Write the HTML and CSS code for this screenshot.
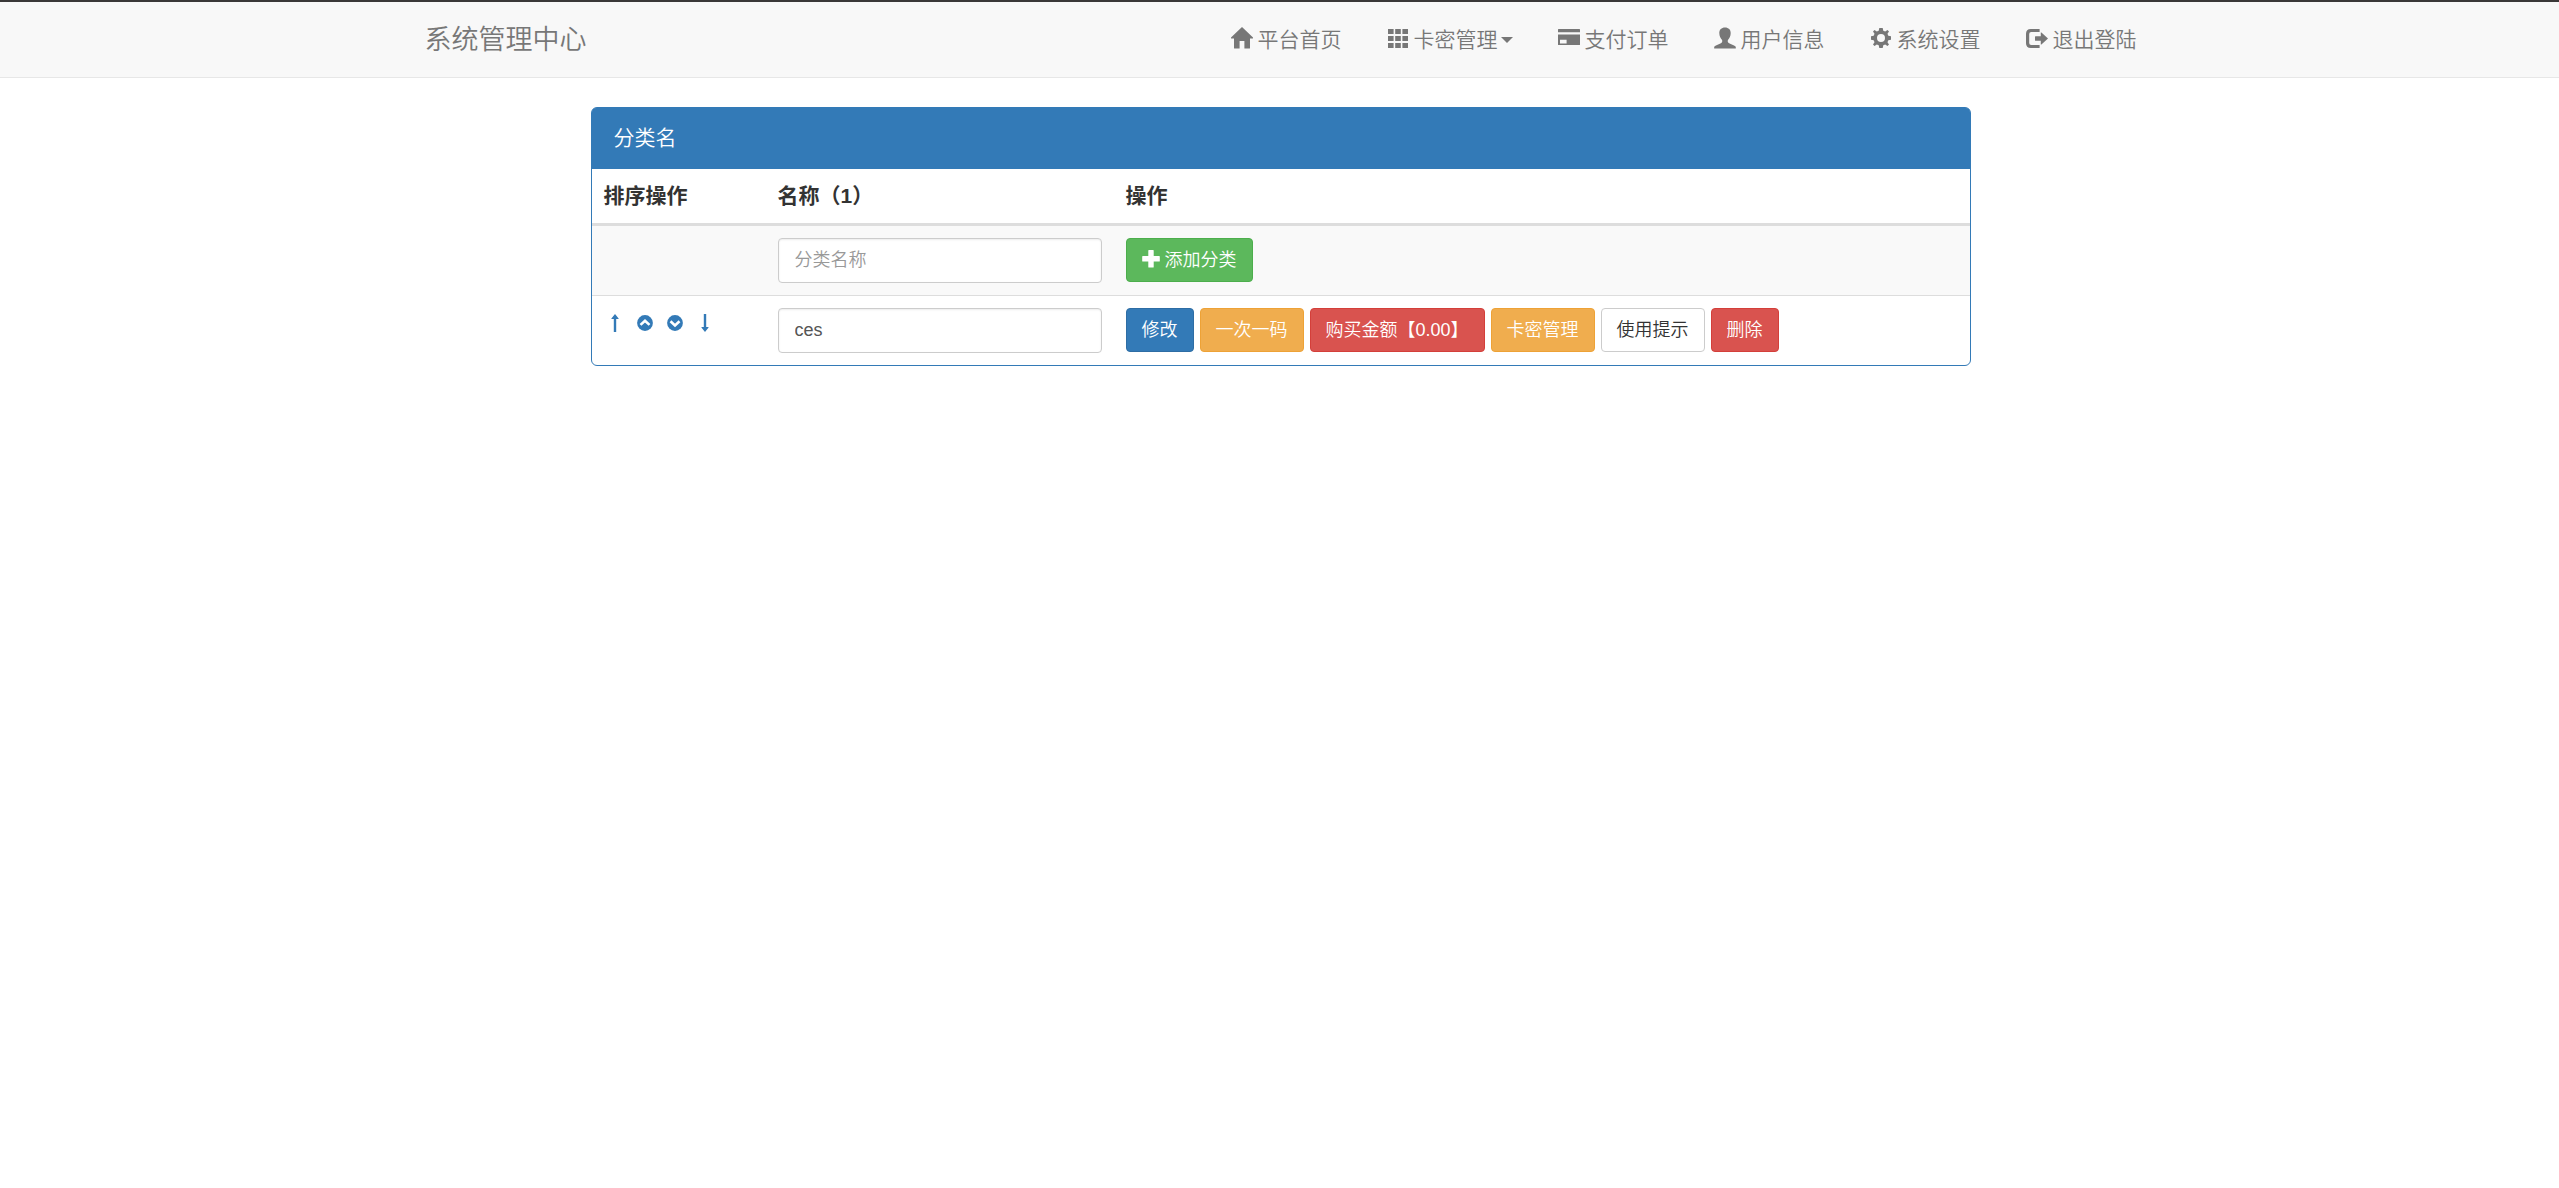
FILE: index.html
```
<!DOCTYPE html>
<html lang="zh-CN">
<head>
<meta charset="utf-8">
<meta name="viewport" content="width=device-width, initial-scale=1">
<title>系统管理中心</title>
<link rel="stylesheet" href="styles.css">
</head>
<body>
<header class="navbar">
  <div class="navbar-inner">
    <a class="brand" href="#">系统管理中心</a>
    <nav class="menu">
      <a class="menu-link" href="#">
        <svg class="icon" viewBox="0 0 22 22" aria-hidden="true"><path d="M11 0 22 10.6c.2.6 0 1-.6 1H19V21q0 .6-.6.6H13.400V14H8.600v7.600H3.600Q3 21.600 3 21V11.600H.6c-.6 0-.8-.4-.6-1z"/></svg>
        <span>平台首页</span>
      </a>
      <a class="menu-link" href="#">
        <svg class="icon" viewBox="0 0 22 22" aria-hidden="true"><path d="M1 2h5.600v5H1zM8.200 2h5.600v5H8.200zM15.400 2H21v5h-5.600zM1 9h5.600v5H1zM8.200 9h5.600v5H8.200zM15.400 9H21v5h-5.600zM1 16h5.600v5H1zM8.200 16h5.600v5H8.200zM15.400 16H21v5h-5.600z"/></svg>
        <span>卡密管理</span>
        <i class="caret"></i>
      </a>
      <a class="menu-link" href="#">
        <svg class="icon" viewBox="0 0 22 22" aria-hidden="true"><path fill-rule="evenodd" d="M.6 2h20.800q.6 0 .6.600V5.200H0V2.600Q0 2 .6 2zM0 7.600h22v9.800q0 .6-.6.600H.6q-.6 0-.6-.6zM2 12.800v3.600h6.600v-3.600z"/></svg>
        <span>支付订单</span>
      </a>
      <a class="menu-link" href="#">
        <svg class="icon" viewBox="0 0 22 22" aria-hidden="true"><path d="M11 .4c3.600 0 5.700 2.200 5.700 5.600 0 3.200-1.300 5.200-2.600 6.800-.6.900-.5 2.200.3 2.900 1.600 1.200 6.600 2.500 7.300 4.100.2.500.1 1.800.1 1.800H.2s-.1-1.300.1-1.800c.7-1.600 5.700-2.900 7.300-4.100.8-.7.9-2 .3-2.900C6.600 11.200 5.300 9.200 5.300 6 5.300 2.600 7.400.4 11 .4z"/></svg>
        <span>用户信息</span>
      </a>
      <a class="menu-link" href="#">
        <svg class="icon" viewBox="0 0 22 22" aria-hidden="true"><path fill-rule="evenodd" d="m9.300 1h3.400l.6 2.700 1.900.8 2.300-1.500L19 4.500 17.500 6.800l.8 1.900 2.700.6v3.400l-2.700.6-.8 1.900L19 17.500 17.500 19l-2.300-1.500-1.900.8-.6 2.700H9.300l-.6-2.700-1.900-.8L4.500 19 3 17.500l1.500-2.300-.8-1.900L1 12.700V9.300l2.700-.6.8-1.900L3 4.500 4.500 3l2.300 1.500 1.900-.8zM11 7a4 4 0 1 0 0 8 4 4 0 0 0 0-8z"/></svg>
        <span>系统设置</span>
      </a>
      <a class="menu-link" href="#">
        <svg class="icon" viewBox="0 0 22 22" aria-hidden="true"><path d="M13.600 2v3H5.200Q3.200 5 3.200 7v9q0 2 2 2h8.400v3H4.800Q0 21 0 16.200V6.800Q0 2 4.800 2zM14.800 5.600q.2-.4.600 0L22 11.500l-6.600 5.900q-.4.400-.6 0V13.800H9.600q-.6 0-.6-.6V9.800q0-.6.6-.6h5.200z"/></svg>
        <span>退出登陆</span>
      </a>
    </nav>
  </div>
</header>

<main class="content">
  <section class="panel">
    <h1 class="panel-title">分类名</h1>
    <table class="table">
      <thead>
        <tr>
          <th class="col-sort">排序操作</th>
          <th class="col-name">名称（1）</th>
          <th>操作</th>
        </tr>
      </thead>
      <tbody>
        <tr>
          <td></td>
          <td><input class="field" type="text" placeholder="分类名称" aria-label="分类名称"></td>
          <td>
            <div class="actions">
              <button class="btn btn-success" type="button">
                <svg class="btn-icon" viewBox="0 0 18 18" aria-hidden="true"><path d="M6.900 0h4.200q.6 0 .6.600V6.100h5.500q.6 0 .6.600v4.200q0 .6-.6.600H11.700v5.500q0 .6-.6.600H6.900q-.6 0-.6-.6V11.500H.8q-.6 0-.6-.6V6.700q0-.6.600-.6H6.300V.6q0-.6.600-.6z"/></svg>
                <span>添加分类</span>
              </button>
            </div>
          </td>
        </tr>
        <tr>
          <td>
            <div class="sort">
              <a class="sort-link" href="#" aria-label="置顶"><svg class="sort-icon" viewBox="0 0 18 18" aria-hidden="true"><path d="M9 0l3.600 4.400q.2.600-.4.600H10.200V18H7.800V5H5.800q-.6 0-.4-.6z"/></svg></a>
              <a class="sort-link" href="#" aria-label="上移"><svg class="sort-icon" viewBox="0 0 18 18" aria-hidden="true"><circle cx="9" cy="9" r="7.900"/><path class="chevron" d="M4.500 10.900 9 6.700l4.500 4.200"/></svg></a>
              <a class="sort-link" href="#" aria-label="下移"><svg class="sort-icon" viewBox="0 0 18 18" aria-hidden="true"><circle cx="9" cy="9" r="7.900"/><path class="chevron" d="M4.500 7.300 9 11.500l4.500-4.200"/></svg></a>
              <a class="sort-link" href="#" aria-label="置底"><svg class="sort-icon" viewBox="0 0 18 18" aria-hidden="true"><path d="M9 18l3.600-4.400q.2-.6-.4-.6H10.200V0H7.800V13H5.800q-.6 0-.4.600z"/></svg></a>
            </div>
          </td>
          <td><input class="field" type="text" value="ces" aria-label="名称"></td>
          <td>
            <div class="actions">
              <button class="btn btn-primary" type="button">修改</button>
              <button class="btn btn-warning" type="button">一次一码</button>
              <button class="btn btn-danger" type="button">购买金额【0.00】</button>
              <button class="btn btn-warning" type="button">卡密管理</button>
              <button class="btn btn-default" type="button">使用提示</button>
              <button class="btn btn-danger" type="button">删除</button>
            </div>
          </td>
        </tr>
      </tbody>
    </table>
  </section>
</main>
</body>
</html>
```
FILE: styles.css
```
* {
  box-sizing: border-box;
}

body {
  margin: 0;
  border-top: 2px solid #3a3838;
  background: #fff;
  color: #333;
  font-family: "Liberation Sans", "Noto Sans CJK SC", sans-serif;
  font-size: 21px;
  font-weight: 350;
  line-height: 30px;
}

a {
  color: inherit;
  text-decoration: none;
}

.navbar {
  padding-left: 2px;
  background: #f8f8f8;
  border-bottom: 1px solid #e7e7e7;
  color: #777;
}

.navbar-inner {
  display: flex;
  flex-wrap: wrap;
  align-items: center;
  justify-content: space-between;
  max-width: 1756px;
  min-height: 75px;
  margin: 0 auto;
  padding: 0 22px;
}

.brand {
  font-size: 27px;
}

.menu {
  display: flex;
  flex-wrap: wrap;
  gap: 0 45px;
}

.menu-link {
  display: flex;
  align-items: center;
  gap: 5px;
}

.icon {
  width: 22px;
  height: 22px;
  margin-bottom: 4px;
  fill: currentColor;
}

.caret {
  margin-left: -2px;
  border: 6px solid transparent;
  border-top-color: currentColor;
  border-bottom: 0;
}

.content {
  max-width: 1382px;
  margin: 29px auto;
  padding-left: 2px;
}

.panel {
  border: 1px solid #337ab7;
  border-radius: 6px;
}

.panel-title {
  margin: 0;
  padding: 14px 22px 16px;
  background: #337ab7;
  border-radius: 4px 4px 0 0;
  color: #fff;
  font-size: 21px;
  font-weight: 350;
  line-height: 31px;
}

.table {
  width: 100%;
  border-collapse: separate;
  border-spacing: 0;
  table-layout: fixed;
}

.table th,
.table td {
  padding: 12px;
  text-align: left;
  vertical-align: top;
}

.table th {
  border-bottom: 3px solid #ddd;
  font-weight: 700;
}

.table tbody tr:nth-child(odd) td {
  background: #f9f9f9;
}

.table tbody tr + tr td {
  border-top: 1px solid #ddd;
}

.col-sort {
  width: 174px;
}

.col-name {
  width: 348px;
}

.field {
  display: block;
  width: 100%;
  height: 45px;
  padding: 0 16px;
  border: 1px solid #ccc;
  border-radius: 4px;
  background: #fff;
  box-shadow: inset 0 1px 2px rgba(0, 0, 0, 0.08);
  color: #555;
  font: inherit;
  font-size: 18px;
}

.field::placeholder {
  color: #999;
  opacity: 1;
}

.actions {
  display: flex;
  flex-wrap: wrap;
  gap: 6px;
}

.btn {
  display: flex;
  align-items: center;
  gap: 5px;
  height: 44px;
  padding: 0 15px;
  border: 1px solid #ccc;
  border-radius: 4px;
  color: #fff;
  font: inherit;
  font-size: 18px;
}

.btn-icon {
  width: 18px;
  height: 18px;
  margin-bottom: 2px;
  fill: currentColor;
}

.btn-primary {
  background: #337ab7;
  border-color: #2e6da4;
}

.btn-success {
  background: #5cb85c;
  border-color: #4cae4c;
}

.btn-warning {
  background: #f0ad4e;
  border-color: #eea236;
}

.btn-danger {
  background: #d9534f;
  border-color: #d43f3a;
}

.btn-default {
  background: #fff;
  color: #333;
}

.sort {
  display: flex;
  gap: 12px;
  padding: 6px 2px;
  color: #337ab7;
}

.sort-link {
  display: flex;
}

.sort-icon {
  width: 18px;
  height: 18px;
  fill: currentColor;
}

.chevron {
  fill: none;
  stroke: #fff;
  stroke-width: 2.600;
}
```
